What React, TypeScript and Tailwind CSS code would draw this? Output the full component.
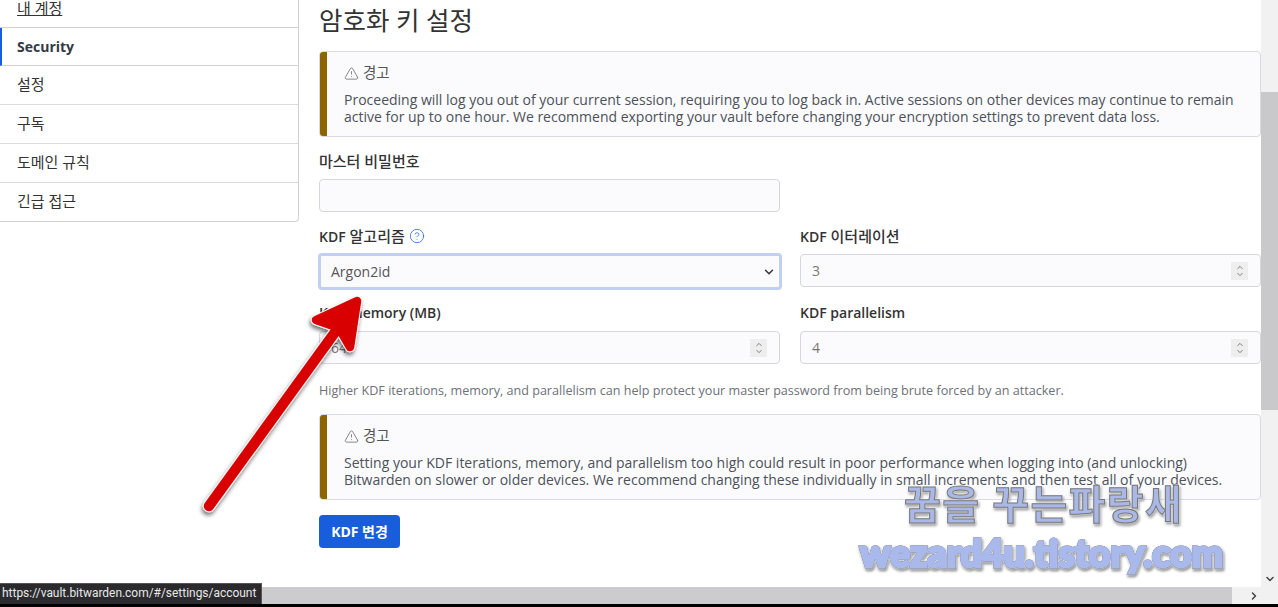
import { ChevronDown, ChevronRight, ChevronUp, CircleHelp, TriangleAlert } from 'lucide-react';

const font = { fontFamily: '"Open Sans", "Noto Sans CJK KR", sans-serif' };

const navItems = ['설정', '구독', '도메인 규칙', '긴급 접근'];

function Callout({ children }: { children: React.ReactNode }) {
  return (
    <div className="flex h-[86px] overflow-hidden rounded-[4px] border border-[#d9dbe3] bg-[#fbfbfd]">
      <div className="w-[7px] shrink-0 bg-[#8c6500]" />
      <div className="pl-[17px] pt-[11px] pr-[16px]">
        <div className="flex h-[20px] items-center gap-[4px] text-[14.5px] text-[#555]">
          <TriangleAlert className="h-[15px] w-[15px]" strokeWidth={1.1} /> 경고
        </div>
        <p className="mt-[8px] text-[14px] leading-[17px] text-[#4d5159]">{children}</p>
      </div>
    </div>
  );
}

function NumberField({ value }: { value: string }) {
  return (
    <div className="flex h-[33px] items-center justify-between rounded-[4px] border border-[#d5d7de] bg-[#fbfbfd] pl-[11px] pr-[12px] text-[14px] text-[#777]">
      <span>{value}</span>
      <span className="flex h-[18px] w-[17px] flex-col items-center justify-center bg-[#eeeeee] text-[#666]">
        <ChevronUp className="-mb-[1px] h-[9px] w-[12px]" strokeWidth={2.2} />
        <ChevronDown className="-mt-[1px] h-[9px] w-[12px]" strokeWidth={2.2} />
      </span>
    </div>
  );
}

export default function App() {
  return (
    <div className="relative flex h-[607px] w-[1278px] flex-col overflow-hidden bg-white" style={font}>
      <div className="flex h-[587px] shrink-0">
        <div className="flex min-w-0 flex-1 overflow-hidden">
          {/* Sidebar */}
          <aside className="h-[222px] w-[299px] shrink-0 rounded-br-[4px] border-r border-b border-[#d0d2d6] text-[15px] text-[#333]">
            <div className="h-[28px] border-b border-[#d0d2d6] pl-[17px] leading-[16px] underline">내 계정</div>
            <div className="flex h-[38px] items-center border-b border-l-2 border-[#d0d2d6] border-l-[#175ddc] pl-[15px] text-[14px] font-bold text-[#333a45]">Security</div>
            {navItems.map((item) => (
              <div key={item} className="flex h-[39px] items-center border-b border-[#d8dade] pb-[2px] pl-[17px] last:border-b-0">{item}</div>
            ))}
          </aside>

          {/* Main */}
          <main className="min-w-0 flex-1 pl-[20px]">
            <h1 className="h-[51px] pt-[2px] text-[25.5px] leading-[36px] font-normal text-[#333]">암호화 키 설정</h1>
            <Callout>
              Proceeding will log you out of your current session, requiring you to log back in. Active sessions on other devices may continue to remain<br />
              active for up to one hour. We recommend exporting your vault before changing your encryption settings to prevent data loss.
            </Callout>

            <label className="mt-[14px] block h-[28px] text-[15px] leading-[20px] font-medium text-[#333]">마스터 비밀번호</label>
            <div className="h-[33px] w-[461px] rounded-[4px] border border-[#d5d7de] bg-[#fbfbfd]" />

            <div className="mt-[14px] grid grid-cols-2 gap-x-[20px]">
              <div>
                <label className="flex h-[28px] items-start gap-[4px] text-[15px] leading-[20px] font-medium text-[#333]">
                  <span><span className="text-[14px] font-semibold">KDF</span> 알고리즘</span>
                  <CircleHelp className="mt-[2px] h-[16px] w-[16px] text-[#175ddc]" strokeWidth={1.1} />
                </label>
                <div className="-mt-[1px] -mr-[2px] -mb-[1px] -ml-[1px] flex h-[37px] items-center justify-between rounded-[4px] border-[3px] border-[#c0d0ee] bg-[#fbfbfd] pl-[10px] pr-[3px] text-[14px] text-[#555]">
                  Argon2id <ChevronDown className="h-[14px] w-[14px] text-[#333]" strokeWidth={2.5} />
                </div>
              </div>
              <div>
                <label className="block h-[28px] text-[15px] leading-[20px] font-medium text-[#333]">
                  <span className="text-[14px] font-semibold">KDF</span> 이터레이션
                </label>
                <div className="h-[33px]"><NumberField value="3" /></div>
              </div>
              <div className="mt-[14px]">
                <label className="block h-[28px] text-[14px] leading-[20px] font-semibold text-[#333]">KDF memory (MB)</label>
                <NumberField value="64" />
              </div>
              <div className="mt-[14px]">
                <label className="block h-[28px] text-[14px] leading-[20px] font-semibold text-[#333]">KDF parallelism</label>
                <NumberField value="4" />
              </div>
            </div>

            <p className="mt-[18px] h-[32px] text-[12.6px] leading-[18px] text-[#6d7178]">
              Higher KDF iterations, memory, and parallelism can help protect your master password from being brute forced by an attacker.
            </p>
            <Callout>
              Setting your KDF iterations, memory, and parallelism too high could result in poor performance when logging into (and unlocking)<br />
              Bitwarden on slower or older devices. We recommend changing these individually in small increments and then test all of your devices.
            </Callout>
            <button className="mt-[15px] h-[33px] w-[81px] rounded-[4px] bg-[#175ddc] text-[14px] font-bold text-white">KDF 변경</button>
          </main>
        </div>

        {/* Vertical scrollbar */}
        <div className="flex w-[17px] shrink-0 flex-col bg-[#f1f1f1]">
          <div className="h-[92px] shrink-0" />
          <div className="h-[318px] shrink-0 bg-[#c9c8ca]" />
          <div className="flex flex-1 items-end justify-center pb-[2px]">
            <ChevronDown className="h-[12px] w-[12px] text-[#444]" strokeWidth={3} />
          </div>
        </div>
      </div>

      {/* Horizontal scrollbar */}
      <div className="flex h-[17px] shrink-0 bg-[#f1f1f1]">
        <div className="w-[1232px] bg-[#cccbcd]" />
        <div className="flex flex-1 items-center justify-end pr-[18px]">
          <ChevronRight className="h-[12px] w-[12px] text-[#444]" strokeWidth={3} />
        </div>
      </div>
      <div className="flex-1 bg-black" />

      {/* Annotation arrow */}
      <svg className="pointer-events-none absolute top-0 left-0" width="1278" height="607" viewBox="0 0 1278 607">
        <defs>
          <filter id="arrowShadow" x="-20%" y="-20%" width="140%" height="140%">
            <feDropShadow dx="-1" dy="3" stdDeviation="2" floodColor="#000" floodOpacity="0.55" />
          </filter>
        </defs>
        <g filter="url(#arrowShadow)" strokeLinecap="round" strokeLinejoin="round">
          <path d="M209 506 L341 324" stroke="#f4f4f4" strokeWidth="12.5" fill="none" />
          <path d="M316 320 L357 301 L350 347 L339 328 Z" stroke="#f4f4f4" strokeWidth="10.5" fill="#f4f4f4" />
          <path d="M209 506 L341 324" stroke="#d80000" strokeWidth="10.5" fill="none" />
          <path d="M316 320 L357 301 L350 347 L339 328 Z" stroke="#d80000" strokeWidth="8.5" fill="#d80000" />
        </g>
      </svg>

      {/* Watermark */}
      <div className="pointer-events-none absolute top-[479px] left-[904px] text-[40px] leading-[50px] font-bold tracking-[1.4px] whitespace-nowrap text-[#aab8e8] [-webkit-text-stroke:1px_#777] [filter:drop-shadow(0_0_1px_#fff)_drop-shadow(1px_2px_1px_#999)]">꿈을 꾸는파랑새</div>
      <div className="pointer-events-none absolute top-[528px] left-[860px] text-[37.5px] leading-[50px] font-black whitespace-nowrap text-[#a9b9ec] [-webkit-text-stroke:3px_#a9b9ec] [filter:drop-shadow(0_0_0.6px_#555)_drop-shadow(0_0_1px_#fff)_drop-shadow(1px_2px_1px_#888)]" style={{ fontFamily: 'Lato, sans-serif' }}>wezard4u.tistory.com</div>

      {/* Status tooltip */}
      <div className="absolute top-[583px] left-0 flex h-[21px] w-[262px] items-center border-t border-r border-[#555] bg-[#2b2b2e] pl-[2px] text-[11.95px] whitespace-nowrap text-[#e8e8e8]" style={{ fontFamily: 'Roboto, sans-serif' }}>
        https://vault.bitwarden.com/#/settings/account
      </div>
    </div>
  );
}
